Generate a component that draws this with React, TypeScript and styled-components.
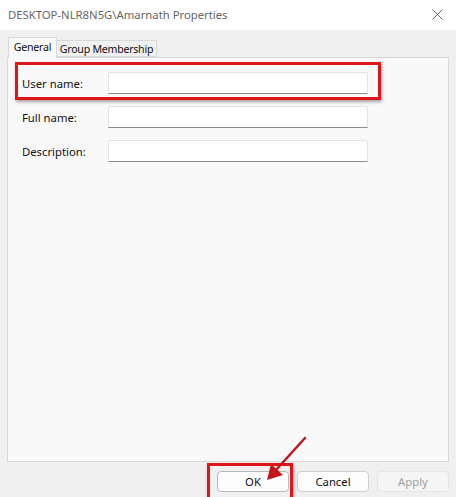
import React from 'react';
import styled, { createGlobalStyle } from 'styled-components';

const GlobalStyle = createGlobalStyle`
  html, body {
    margin: 0;
    padding: 0;
    background: #f0f0f0;
  }
  body {
    font-family: "Noto Sans", "Open Sans", sans-serif;
    font-size: 11.3px;
  }
`;

const fields = ['User name:', 'Full name:', 'Description:'];

export default function App() {
  return (
    <>
      <GlobalStyle />
      <Window>
        <TitleBar>
          <Title>DESKTOP-NLR8N5G\Amarnath Properties</Title>
          <CloseButton>
            <svg width="11" height="11" viewBox="0 0 11 11">
              <path d="M0.5 0.5 L10.5 10.5 M10.5 0.5 L0.5 10.5" stroke="#6a6a6a" strokeWidth="1" fill="none" />
            </svg>
          </CloseButton>
        </TitleBar>

        <Body>
          <TabStrip>
            <Tab active>General</Tab>
            <Tab>Group Membership</Tab>
          </TabStrip>

          <Panel>
            {fields.map((label) => (
              <FieldRow key={label}>
                <Label>{label}</Label>
                <TextBox />
              </FieldRow>
            ))}
          </Panel>

          <ButtonRow>
            <DialogButton focused>OK</DialogButton>
            <DialogButton>Cancel</DialogButton>
            <DialogButton disabled>Apply</DialogButton>
          </ButtonRow>
        </Body>

        {/* annotation overlays */}
        <Highlight style={{ left: 15, top: 62, width: 366, height: 38 }} />
        <Highlight style={{ left: 207, top: 463, width: 86, height: 42 }} />
        <Arrow width="456" height="497" viewBox="0 0 456 497">
          <line x1="305" y1="438" x2="276" y2="470" stroke="#c2161c" strokeWidth="2.5" strokeLinecap="round" />
          <polygon points="267,480 271,464 283,475" fill="#c2161c" />
        </Arrow>
      </Window>
    </>
  );
}

const Window = styled.div`
  position: relative;
  width: 456px;
  height: 497px;
  display: flex;
  flex-direction: column;
  overflow: hidden;
  background: #f0f0f0;
`;

const TitleBar = styled.div`
  height: 30px;
  flex: none;
  background: #ffffff;
  display: flex;
  align-items: center;
  justify-content: space-between;
  padding-left: 8px;
  box-sizing: border-box;
`;

const Title = styled.span`
  color: #666666;
  font-size: 11.3px;
  margin-top: -2px;
`;

const CloseButton = styled.div`
  width: 38px;
  height: 30px;
  display: flex;
  align-items: center;
  justify-content: center;
  margin-top: -2px;
`;

const Body = styled.div`
  flex: 1;
  display: flex;
  flex-direction: column;
  padding: 7px 7px 0 7px;
`;

const TabStrip = styled.div`
  display: flex;
  align-items: flex-end;
  height: 20px;
  padding-left: 1px;
  position: relative;
  z-index: 1;
`;

const Tab = styled.div<{ active?: boolean }>`
  box-sizing: border-box;
  height: ${(p) => (p.active ? '21px' : '17px')};
  margin-bottom: ${(p) => (p.active ? '-1px' : '0')};
  width: ${(p) => (p.active ? '49px' : '100px')};
  padding-bottom: ${(p) => (p.active ? '2px' : '0')};
  display: flex;
  align-items: center;
  justify-content: center;
  background: ${(p) => (p.active ? '#f9f9f9' : '#f0f0f0')};
  border: 1px solid #d9d9d9;
  border-bottom: ${(p) => (p.active ? 'none' : '1px solid #d9d9d9')};
  border-left: ${(p) => (p.active ? '1px solid #d9d9d9' : 'none')};
  color: #111111;
  font-size: 10.6px;
  letter-spacing: -0.25px;
  white-space: nowrap;
`;

const Panel = styled.div`
  height: 405px;
  box-sizing: border-box;
  background: #f9f9f9;
  border: 1px solid #d9d9d9;
  padding: 14px 0 0 14px;
  display: flex;
  flex-direction: column;
  gap: 12px;
`;

const FieldRow = styled.div`
  display: flex;
  align-items: center;
  height: 22px;
`;

const Label = styled.span`
  width: 86px;
  color: #111111;
`;

const TextBox = styled.div`
  width: 260px;
  height: 22px;
  box-sizing: border-box;
  background: #ffffff;
  border: 1px solid #e3e3e3;
  border-bottom: 1px solid #8a8a8a;
  border-radius: 2px 2px 0 0;
`;

const ButtonRow = styled.div`
  display: flex;
  justify-content: flex-end;
  gap: 8px;
  margin-top: 9px;
`;

const DialogButton = styled.div<{ focused?: boolean; disabled?: boolean }>`
  width: 72px;
  height: 21px;
  box-sizing: border-box;
  display: flex;
  align-items: center;
  justify-content: center;
  border-radius: 4px;
  background: ${(p) => (p.disabled ? '#f5f5f5' : '#fdfdfd')};
  border: 1px solid ${(p) => (p.disabled ? '#e6e6e6' : p.focused ? '#b8b8b8' : '#cfcfcf')};
  color: ${(p) => (p.disabled ? '#9f9f9f' : '#111111')};
`;

const Highlight = styled.div`
  position: absolute;
  box-sizing: border-box;
  border: 3px solid #e0141b;
  box-shadow: 1px 2px 3px rgba(0, 0, 0, 0.35);
  pointer-events: none;
`;

const Arrow = styled.svg`
  position: absolute;
  left: 0;
  top: 0;
  pointer-events: none;
`;
